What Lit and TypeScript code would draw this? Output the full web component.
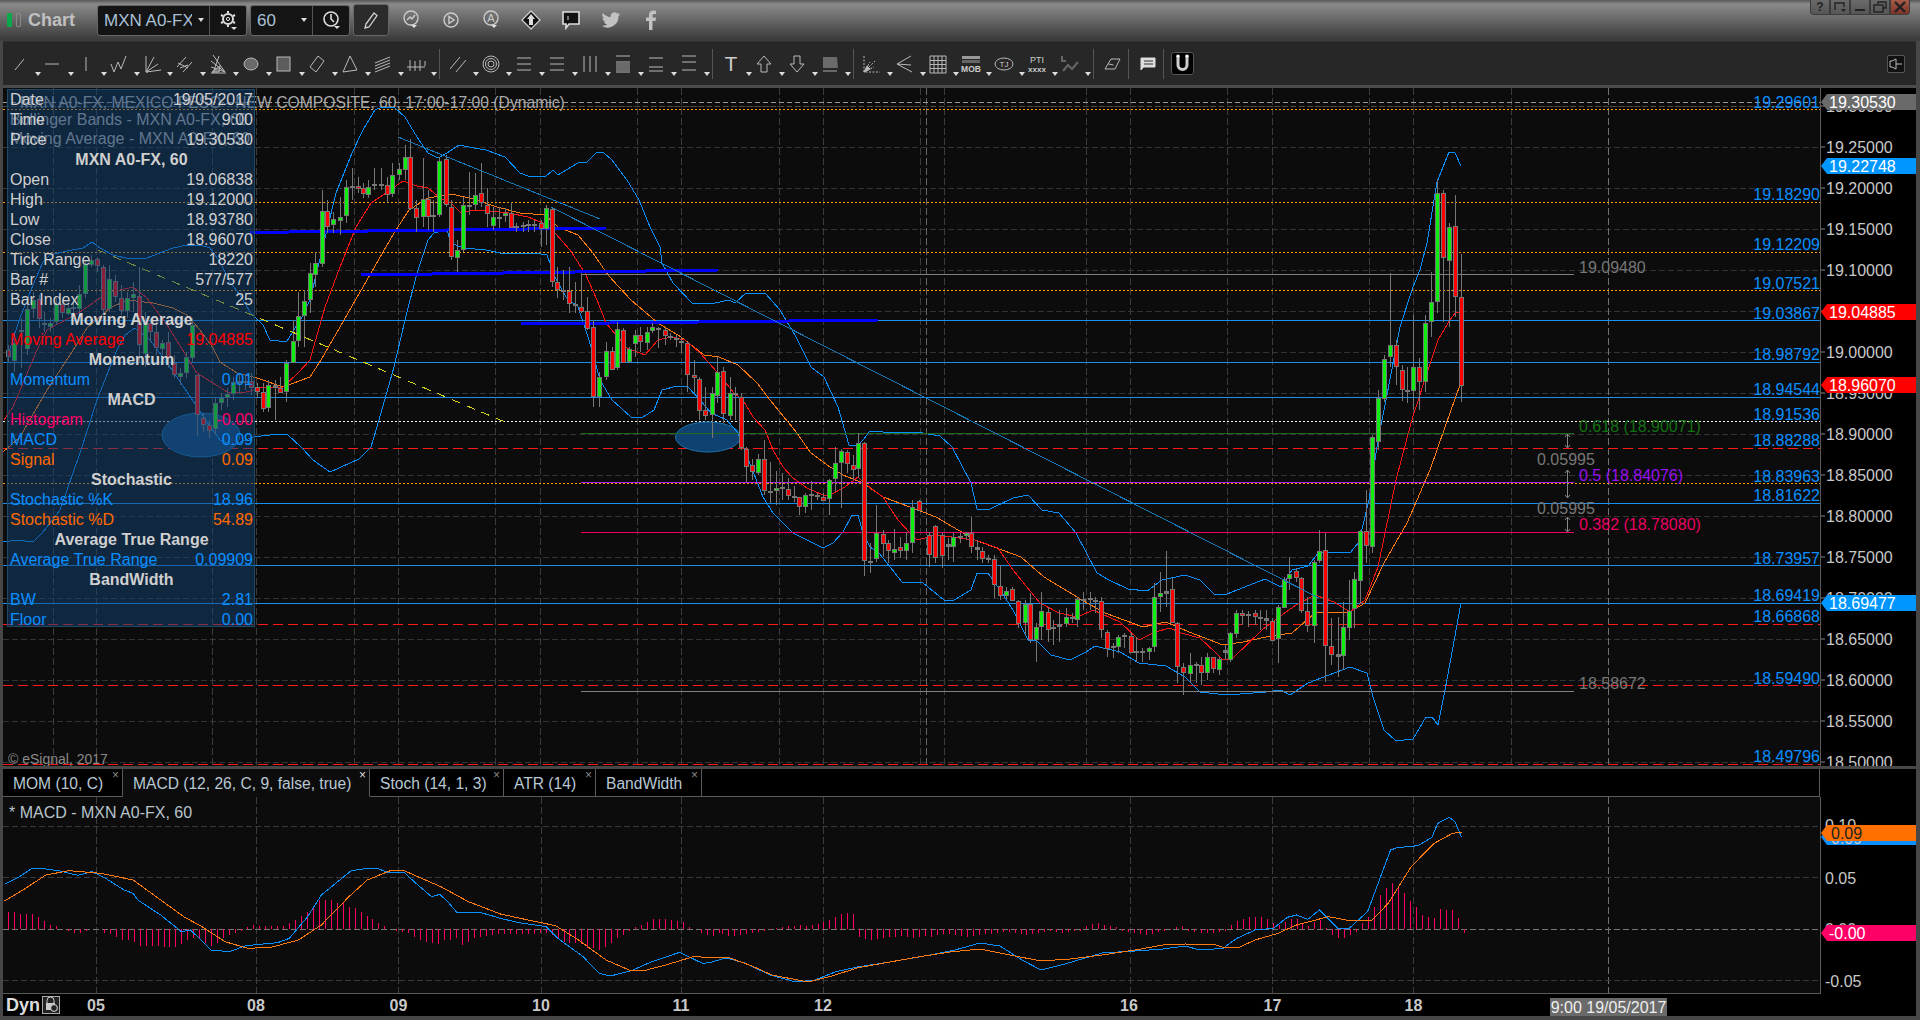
import { LitElement, html, svg, css } from "lit";
import { customElement } from "lit/decorators.js";

// price pane: 41px per 0.05, 19.25 sits at y=147
const py = (p: number) => 147 + (19.25 - p) * 820;

const BLUE = "#0a8fff";
const ORANGE = "#ff9a10";
const RED = "#ff1a1a";

type Candle = { x: number; c: string; t: number; b: number; wt: number; wb: number };

// rows are: dx colour top bottom wickTop wickBottom, read off the chart at a given scale
function seg(x0: number, y0: number, sx: number, sy: number, raw: string): Candle[] {
  const p = raw.trim().split(/\s+/);
  const out: Candle[] = [];
  for (let i = 0; i + 5 < p.length; i += 6) {
    out.push({
      x: x0 + +p[i] / sx,
      c: p[i + 1],
      t: y0 + +p[i + 2] / sy,
      b: y0 + +p[i + 3] / sy,
      wt: y0 + +p[i + 4] / sy,
      wb: y0 + +p[i + 5] / sy,
    });
  }
  return out;
}

const candles: Candle[] = [
  ...seg(0, 85, 3, 3, `
    25 r 795 813 780 830  43 g 775 825 740 860  62 n 735 738 700 850  80 g 672 790 640 810
    98 g 645 668 620 700  116 r 642 700 630 730  133 n 715 717 680 740  150 g 714 724 700 740
    168 g 658 710 640 720  185 r 658 682 645 700  203 g 668 682 650 690  220 n 665 668 640 690
    238 g 628 670 600 680  256 g 538 625 525 640  274 g 524 535 510 545  292 r 523 540 515 560
    310 r 545 670 540 690  328 g 583 670 540 680  346 r 588 633 570 650  364 r 640 675 600 690
    380 g 640 675 620 700  398 g 628 637 590 680  416 r 632 776 545 830  434 g 715 805 680 845
    451 r 715 740 700 770  469 r 740 785 720 810  487 g 775 790 765 810  505 r 770 815 740 850
    523 r 833 866 810 880  541 g 865 873 850 900  557 g 817 862 800 880  575 g 720 815 700 830
    592 r 870 987 870 1053  610 r 1000 1017 985 1040  628 r 1019 1033 1005 1060  646 g 955 1030 935 1050
    664 g 940 953 925 975  682 g 928 937 910 965  700 g 890 923 875 945  718 n 887 890 865 925
    736 n 887 890 870 915  752 r 887 905 865 930  770 r 905 917 895 940`),
  ...seg(260, 100, 2.613, 3, `
    8 r 875 922 850 935  22 g 856 922 840 935  38 n 855 862 840 960  53 r 865 877 830 880
    69 g 790 875 780 905  85 g 722 785 660 790  100 g 647 718 575 740  116 g 602 643 570 740
    130 g 520 598 490 640  145 g 490 522 455 560  161 g 332 487 270 500  176 r 332 376 300 400
    192 g 358 372 335 400  208 g 350 358 290 405  224 g 262 346 240 370  240 n 257 260 205 300
    255 r 257 262 230 280  270 r 265 280 250 295  283 g 260 280 240 295  299 g 252 256 205 270
    315 n 251 254 205 270  331 r 254 281 230 310  346 g 226 280 190 290  362 g 208 224 190 240
    378 g 170 205 135 240  393 r 170 322 118 330  408 r 325 352 300 395  425 g 298 348 175 380
    440 r 298 348 270 390  453 n 344 348 300 395  469 g 182 342 170 350  485 r 178 312 165 320
    500 r 322 468 300 480  516 g 450 470 420 515  531 g 316 447 290 455  547 n 316 319 215 345
    563 g 284 312 220 330  578 r 280 308 190 320  594 r 314 338 265 380  608 g 350 374 320 390
    624 n 350 353 320 385  640 g 340 346 325 365  655 r 338 380 305 385  670 n 379 382 370 395
    686 n 376 379 365 395  701 n 371 373 360 395  717 n 371 373 360 395  733 r 370 385 360 440
    748 g 325 385 315 435  762 r 326 542 320 560  777 r 545 566 500 595  793 n 571 575 510 600
    808 r 572 607 500 640  824 n 613 617 545 640  840 r 622 634 520 640  855 r 632 682 590 690
    871 r 682 890 660 920  887 g 832 890 815 920  903 g 752 826 725 840  919 r 752 805 740 810
    933 g 688 802 665 810  948 r 690 785 685 790  963 g 748 784 740 790  979 g 706 730 690 770
    994 r 706 725 680 755  1010 g 695 725 680 750  1025 g 682 690 670 700  1040 n 683 685 680 745
    1057 r 690 706 685 735  1072 n 708 712 700 720  1086 n 715 719 705 740  1101 n 724 727 710 760
    1117 r 730 822 725 875  1133 r 825 832 780 880  1148 r 838 930 830 960  1164 r 930 945 860 960
    1180 g 878 940 860 1015  1195 g 816 884 770 910  1211 r 814 940 800 970  1227 g 878 944 830 960
    1242 n 880 884 860 960  1256 r 890 1040 880 1050`),
  ...seg(730, 400, 3, 3, `
    49 r 146 196 140 245  67 r 196 214 178 240  85 g 176 214 162 225  103 r 176 270 120 285
    121 n 274 277 185 310  139 g 263 268 212 315  157 n 262 265 220 300  175 r 266 283 235 300
    193 n 289 293 258 305  208 r 292 319 290 345  226 g 286 319 280 338  244 n 283 287 242 330
    262 n 284 287 280 300  280 r 290 298 280 300  298 g 241 295 238 345  316 g 190 234 140 275
    334 g 154 186 148 325  352 r 157 190 150 220  370 r 194 205 165 240  385 g 130 205 100 235
    403 r 130 480 125 527`),
  ...seg(860, 400, 2.613, 3, `
    27 n 482 485 430 520  43 g 400 475 315 485  59 r 402 430 390 470  74 r 430 452 420 490
    90 g 446 455 388 480  105 r 442 452 410 475  121 g 430 452 395 480  137 g 320 425 300 460
    153 r 302 328 300 330  181 r 404 460 395 502  197 r 377 470 375 490  213 r 404 463 400 505
    229 n 433 439 415 480  244 g 412 438 400 485  260 n 407 411 400 430  276 g 400 407 395 420
    291 r 400 440 350 460  307 n 442 448 420 480  320 r 452 472 440 490  335 n 475 478 465 490
    351 r 478 553 465 595  367 r 557 583 495 600  382 g 572 583 562 598  398 r 566 598 560 600
    414 r 602 667 600 685  430 g 612 667 600 705  445 r 612 718 580 730  461 g 680 716 670 785
    474 g 634 678 575 720  490 r 637 688 620 725  505 n 680 684 660 735  521 n 671 676 630 725
    537 g 650 667 625 680  553 n 652 655 640 670  568 g 598 658 590 680  584 n 597 600 575 630
    600 n 595 598 575 630  615 n 601 604 590 640  631 r 603 688 590 715  645 r 695 742 690 770
    660 n 739 743 730 775  675 g 712 738 705 760  691 n 706 709 700 745  707 r 707 754 700 760
    722 n 754 757 710 785  738 n 754 757 745 785  754 g 745 754 740 780  769 g 592 740 550 755
    785 g 580 590 515 635  799 n 572 577 452 620  814 r 568 668 535 670  829 r 670 800 665 850
    845 r 802 818 790 885  861 g 794 818 760 850  877 n 793 796 785 850  892 r 796 818 770 855
    908 g 772 818 760 840  923 r 772 805 770 820  939 g 776 805 770 825  953 n 750 756 735 780
    968 g 700 778 695 785  983 g 638 697 630 715  999 r 638 644 630 675  1015 n 643 647 632 680
    1031 r 640 650 630 675  1046 n 652 655 630 690  1062 n 655 660 630 690  1077 r 662 718 655 720
    1093 g 620 714 615 790  1109 g 536 619 530 625  1122 g 523 535 472 570  1138 r 514 533 505 545
    1153 r 535 632 530 640  1169 r 634 677 590 695  1185 g 487 677 480 730  1200 g 452 480 390 490
    1216 r 449 733 400 845  1232 r 737 762 655 795  1248 n 762 767 650 830  1263 g 680 764 605 810
    1277 g 632 680 540 720  1292 g 538 625 515 685  1307 g 394 540 390 610  1323 r 394 436 270 490
    1339 g 110 436 105 460`),
  ...seg(1350, 170, 3, 3, `
    85 g 685 815 660 840  103 g 566 682 555 695  121 g 526 558 310 590  139 r 526 590 510 645
    157 r 601 658 585 692  172 n 660 664 590 698  190 g 592 660 435 720  208 r 592 634 565 720
    226 g 460 634 435 665  244 g 397 454 305 500  262 g 70 394 30 430  280 r 70 262 60 457
    298 g 170 268 160 472  316 r 167 378 75 440  334 r 380 643 252 697`),
];

const upperBand = [
  [8,355],[20,318],[33,285],[43,262],[50,255],[67,251],[83,248],[92,242],[100,248],[113,255],[130,259],[147,258],[173,248],[187,245],[200,245],[210,248],[220,262],[230,282],[240,295],[250,312],[263,325],[270,340],[279,341],[287,341],[302,317],[310,300],[336,193],[352,153],[363,130],[375,110],[382,107],[394,107],[405,117],[417,137],[428,153],[438,158],[447,153],[459,145],[474,148],[486,150],[505,157],[520,173],[528,176],[545,177],[553,170],[558,175],[578,163],[587,162],[597,152],[604,153],[612,160],[627,180],[639,200],[650,227],[660,247],[662,263],[673,283],[692,303],[715,303],[729,300],[735,303],[746,293],[765,293],[780,310],[796,337],[811,367],[824,377],[838,407],[849,445],[858,445],[863,440],[870,431],[883,432],[917,432],[940,436],[952,447],[971,483],[977,509],[990,509],[1013,498],[1028,495],[1042,510],[1059,513],[1076,533],[1097,573],[1109,580],[1128,589],[1147,591],[1162,580],[1185,575],[1200,580],[1214,594],[1227,594],[1265,579],[1281,587],[1292,570],[1308,566],[1319,552],[1350,553],[1359,542],[1369,500],[1378,440],[1386,400],[1400,327],[1413,287],[1420,270],[1427,243],[1437,182],[1449,152],[1455,153],[1461,166],
];
const lowerBand = [
  [3,542],[17,540],[33,542],[43,532],[60,510],[80,453],[97,400],[110,367],[117,350],[125,335],[135,328],[150,340],[170,367],[187,392],[207,422],[220,440],[233,445],[253,437],[270,435],[287,434],[302,448],[313,460],[330,472],[359,459],[371,447],[379,420],[394,367],[405,320],[417,273],[428,240],[434,233],[447,230],[451,243],[463,248],[486,250],[505,254],[520,253],[535,253],[547,255],[555,277],[566,297],[578,307],[589,340],[600,380],[612,400],[631,417],[643,417],[654,410],[662,390],[677,386],[688,387],[700,400],[711,413],[727,420],[738,433],[763,497],[773,513],[793,533],[813,543],[823,548],[833,543],[843,532],[852,515],[858,515],[863,533],[870,547],[879,553],[902,582],[923,583],[944,600],[954,600],[971,590],[977,573],[988,573],[1000,590],[1013,610],[1028,640],[1036,640],[1051,655],[1070,660],[1086,652],[1095,646],[1120,652],[1139,663],[1166,666],[1185,677],[1200,692],[1227,695],[1266,692],[1281,690],[1290,695],[1308,683],[1350,667],[1367,673],[1373,697],[1384,730],[1396,741],[1413,739],[1426,717],[1432,717],[1438,725],[1445,690],[1453,647],[1461,603],
];
const redMa = [
  [4,420],[13,407],[37,350],[47,330],[80,312],[107,293],[133,287],[147,298],[167,325],[197,373],[213,383],[227,392],[243,393],[260,388],[283,387],[298,373],[310,360],[325,307],[340,267],[356,227],[371,203],[386,193],[403,181],[417,186],[428,188],[440,198],[451,203],[461,213],[474,210],[490,211],[509,213],[528,217],[543,223],[555,233],[570,250],[585,273],[597,300],[606,323],[627,348],[645,355],[658,340],[671,337],[685,340],[700,353],[717,372],[734,393],[743,400],[753,417],[765,430],[773,450],[783,467],[793,478],[807,488],[823,495],[830,495],[845,487],[858,477],[863,482],[883,497],[898,520],[910,533],[917,540],[936,535],[975,540],[998,548],[1013,570],[1040,603],[1059,613],[1078,617],[1093,610],[1120,622],[1139,640],[1155,632],[1170,628],[1181,633],[1200,638],[1216,653],[1223,660],[1233,658],[1262,630],[1279,617],[1296,605],[1315,595],[1334,602],[1350,612],[1365,600],[1378,567],[1396,480],[1411,423],[1415,410],[1428,370],[1438,340],[1450,320],[1455,313],[1460,312],
];
const orangeMa = [
  [3,452],[20,437],[47,390],[70,355],[87,328],[110,308],[127,300],[153,303],[173,308],[187,315],[200,330],[213,348],[220,362],[237,373],[257,378],[283,387],[310,377],[321,360],[344,320],[371,273],[394,233],[409,210],[428,198],[451,194],[474,199],[497,207],[520,213],[545,215],[558,227],[578,235],[593,253],[608,275],[631,300],[658,323],[681,337],[704,355],[719,357],[738,365],[757,383],[770,400],[797,433],[810,452],[827,465],[843,475],[863,483],[883,497],[910,507],[936,517],[975,540],[1021,557],[1044,577],[1082,600],[1105,613],[1143,627],[1166,622],[1189,632],[1223,645],[1243,642],[1266,637],[1292,633],[1315,613],[1350,612],[1365,603],[1384,563],[1407,523],[1430,470],[1445,427],[1451,410],[1460,385],
];

// macd pane
const macdBlue = [
  ...[[10,433],[45,408],[70,385],[100,387],[130,393],[170,406],[200,395],[230,415],[270,450],[290,460],[300,480],[350,525],[395,575],[415,570],[460,630],[500,635],[535,617],[605,608],[630,595],[670,530],[700,465],[740,420],[765,392],[800,385],[825,387],[845,397],[880,397],[910,435],[940,470],[958,463],[975,485],[995,517],[1045,517],[1090,535],[1130,548],[1190,560],[1215,595],[1270,650],[1305,700],[1330,708],[1375,692],[1420,665],[1480,637],[1530,670],[1545,668]].map(([x, y]) => [x / 2.178, 740 + y / 3]),
  [726,958],[745,963],[770,975],[796,982],[815,980],[835,972],[857,967],[890,962],[930,955],[955,950],[980,943],[1000,946],[1022,960],[1041,970],[1065,964],[1102,953],[1135,951],[1163,949],[1185,946],
  ...[[0,570],[50,565],[80,535],[120,510],[160,505],[190,472],[210,465],[235,478],[260,450],[300,505],[325,505],[365,455],[415,270],[430,263],[475,257],[505,232],[518,190],[543,172],[555,185],[570,232]].map(([x, y]) => [1200 + x / 2.178, 760 + y / 3]),
];
const macdOrange = [
  ...[[10,483],[50,450],[100,405],[150,392],[220,400],[290,420],[340,470],[400,530],[440,560],[490,605],[540,625],[590,622],[650,600],[700,555],[760,470],[800,420],[850,392],[880,392],[960,440],[1020,485],[1090,522],[1150,540],[1210,557],[1260,600],[1320,660],[1370,690],[1400,693],[1450,675],[1510,650],[1545,652]].map(([x, y]) => [x / 2.178, 740 + y / 3]),
  [730,958],[752,966],[772,975],[808,982],[832,976],[857,968],[890,962],[918,957],[950,952],[980,949],[1010,955],[1041,961],[1070,959],[1102,955],[1135,950],[1163,945],[1185,944],
  ...[[0,553],[30,553],[50,562],[85,562],[120,540],[170,520],[210,495],[280,470],[330,483],[375,480],[410,430],[460,320],[510,250],[550,220],[570,216]].map(([x, y]) => [1200 + x / 2.178, 760 + y / 3]),
];

const histA = [515,515,522,522,522,530,542,555,558,568,572,578,578,572,568,568,578,582,590,600,600,605,618,618,618,618,620,622,622,612,600,595,595,610,618,608,595,585,580,572,560,555,558,558,558,558,558,550,540,528,515,500,480,480,480,490,490,500,505,515,528,538,548,558,568,572,575,578,590,600,605,610,612,600,600,595,615,605,595,590,587,585,583,583,583,583,583,583,583,580,580,585,598,605,610,610,612,625,625,630,622,610,595,585,572,562,555,545,537,537,538,540,542,545,560,568,578,585,588,580];
const histMid = [-5,-7,-7,-6,-5,-4,-3,-2,-1,1,2,3,3,4,3,4,5,7,9,12,15,16,15,-8,-10,-11,-10,-9,-8,-8,-7,-8,-9,-8,-7,-8,-6,-5,-5,-6,-7,-8,-7,-6,-5,-5,-4,-3,-3,-4,-5,-6,-5,-4,-3,-2,-3,-4,-3,-2,-2,3,5,6,4,3,2,-2,-3,-4,-5,-6,-5,-3,-2,-1,2,3,-2,-3];
const histB = [518,518,518,515,512,495,484,476,470,470,472,478,490,495,485,478,478,490,498,485,480,505,525,535,535,525,515,490,470,440,405,385,368,380,400,423,440,465,472,475,448,450,450,475,518];
const histBars = [
  ...histA.map((d, i) => [8.3 + i * 5.97, 740 + d / 3]),
  ...histMid.map((d, i) => [722 + i * 5.97, 929 - d]),
  ...histB.map((d, i) => [1201 + i * 5.97, 760 + d / 3]),
];

const pts = (a: number[][]) => a.map((p) => p.join(",")).join(" ");

const gridV = [53,96,212,256,354.5,398.5,495,540.5,637.5,681.5,779.5,823,920.5,944,1086.5,1130.5,1227,1272.5,1369.5,1413.5,1511];

const priceLevels = [19.3,19.25,19.2,19.15,19.1,19.05,19.0,18.95,18.9,18.85,18.8,18.75,18.7,18.65,18.6,18.55,18.5];

const levels: { y: number; label: string; labelY: number; color: string; dash?: string }[] = [
  { y: 109, label: "19.29601", labelY: 102, color: ORANGE, dash: "2 2" },
  { y: 202, label: "19.18290", labelY: 194, color: ORANGE, dash: "2 2" },
  { y: 252, label: "19.12209", labelY: 244, color: ORANGE, dash: "2 2" },
  { y: 290, label: "19.07521", labelY: 283, color: ORANGE, dash: "2 2" },
  { y: 320, label: "19.03867", labelY: 313, color: "#1a8fee" },
  { y: 362, label: "18.98792", labelY: 354, color: "#1a8fee" },
  { y: 397, label: "18.94544", labelY: 389, color: "#1a8fee" },
  { y: 421, label: "18.91536", labelY: 414, color: "#f0f0f0", dash: "2 2" },
  { y: 448, label: "18.88288", labelY: 440, color: RED, dash: "10 5" },
  { y: 483, label: "18.83963", labelY: 476, color: ORANGE, dash: "2 2" },
  { y: 503, label: "18.81622", labelY: 495, color: "#1a8fee" },
  { y: 565, label: "18.73957", labelY: 558, color: "#1a8fee" },
  { y: 603, label: "18.69419", labelY: 595, color: "#1a8fee" },
  { y: 624, label: "18.66868", labelY: 616, color: RED, dash: "10 5" },
  { y: 685, label: "18.59490", labelY: 678, color: RED, dash: "10 5" },
  { y: 764, label: "18.49796", labelY: 756, color: RED, dash: "10 5" },
];

const fibs = [
  { y: 274, label: "19.09480", labelY: 267, color: "#808080", text: "#777" },
  { y: 433.5, label: "0.618 (18.90071)", labelY: 426, color: "#1c6a1c", text: "#127012" },
  { y: 482.5, label: "0.5 (18.84076)", labelY: 475, color: "#b020ff", text: "#9a10f0" },
  { y: 532, label: "0.382 (18.78080)", labelY: 524, color: "#f00068", text: "#e80060" },
  { y: 691, label: "18.58672", labelY: 683, color: "#808080", text: "#777" },
];

const tags = [
  { y: 102, label: "19.30530", bg: "#6a6a6a", fg: "#fff" },
  { y: 166, label: "19.22748", bg: "#0096ff", fg: "#fff" },
  { y: 312, label: "19.04885", bg: "#ff0000", fg: "#fff" },
  { y: 385, label: "18.96070", bg: "#ff0000", fg: "#fff" },
  { y: 603, label: "18.69477", bg: "#0096ff", fg: "#fff" },
];

const dataRows: { k: string; v?: string; head?: boolean; cls?: string }[] = [
  { k: "Date", v: "19/05/2017" },
  { k: "Time", v: "9:00" },
  { k: "Price", v: "19.30530" },
  { k: "MXN A0-FX, 60", head: true },
  { k: "Open", v: "19.06838" },
  { k: "High", v: "19.12000" },
  { k: "Low", v: "18.93780" },
  { k: "Close", v: "18.96070" },
  { k: "Tick Range", v: "18220" },
  { k: "Bar #", v: "577/577" },
  { k: "Bar Index", v: "25" },
  { k: "Moving Average", head: true },
  { k: "Moving Average", v: "19.04885", cls: "c-red" },
  { k: "Momentum", head: true },
  { k: "Momentum", v: "0.01", cls: "c-blue" },
  { k: "MACD", head: true },
  { k: "Histogram", v: "-0.00", cls: "c-pink" },
  { k: "MACD", v: "0.09", cls: "c-blue" },
  { k: "Signal", v: "0.09", cls: "c-orange" },
  { k: "Stochastic", head: true },
  { k: "Stochastic %K", v: "18.96", cls: "c-blue" },
  { k: "Stochastic %D", v: "54.89", cls: "c-orange" },
  { k: "Average True Range", head: true },
  { k: "Average True Range", v: "0.09909", cls: "c-blue" },
  { k: "BandWidth", head: true },
  { k: "BW", v: "2.81", cls: "c-blue" },
  { k: "Floor", v: "0.00", cls: "c-blue" },
];

const tabs = [
  { t: "MOM (10, C)", w: 120 },
  { t: "MACD (12, 26, C, 9, false, true)", w: 247, on: true },
  { t: "Stoch (14, 1, 3)", w: 134 },
  { t: "ATR (14)", w: 92 },
  { t: "BandWidth", w: 106 },
];

// toolbar icons, all on a 22x22 box
const tool: Record<string, unknown> = {
  line: svg`<path d="M6 17L15 6"/>`,
  hline: svg`<path d="M3 11H17"/>`,
  vline: svg`<path d="M11 4V18"/>`,
  zig: svg`<path d="M3 11l3 8 4-10 3 7 5-13"/>`,
  fan: svg`<path d="M5 3v16h2M5 19L13 4M5 19l12-8M5 19l15-2"/>`,
  cross: svg`<path d="M3 14L12 4M9 19l9-10M6 15l8-3M4 10l10 5"/>`,
  fibfan: svg`<path d="M6 2l12 17M4 8l14 11M4 14l14 5M4 20h15M12 3L6 20"/><path d="M5 19l8-6-1 6z" fill="#777"/>`,
  ellipse: svg`<ellipse cx="11" cy="11" rx="7" ry="6" fill="#6a6a6a"/>`,
  rect: svg`<rect x="4" y="4" width="13" height="14" fill="#5c5c5c"/>`,
  diamond: svg`<path d="M12 3l6 5-8 11-6-5z"/>`,
  tri: svg`<path d="M11 3l7 14-14 2z"/>`,
  hatch: svg`<path d="M3 10l15-6M3 13l15-6M3 16l15-6M3 19l15-6"/>`,
  fork: svg`<path d="M2 14H20M5 7v11M10 8v10M15 7v11M20 8v5"/>`,
  dbl: svg`<path d="M3 16L13 4M9 19L19 7"/>`,
  rings: svg`<circle cx="11" cy="11" r="8"/><circle cx="11" cy="11" r="5.5"/><circle cx="11" cy="11" r="3"/>`,
  h3: svg`<path d="M4 5H18M4 11H18M4 17H18"/>`,
  v3: svg`<path d="M5 3V19M11 3V19M17 3V19"/>`,
  hfill: svg`<path d="M4 3H18M4 9H18M4 19H18"/><rect x="4" y="10" width="14" height="8" fill="#6a6a6a" stroke="none"/>`,
  h2fill: svg`<path d="M4 5H18M4 14H18M4 18H18"/>`,
  h3b: svg`<path d="M4 3H18M4 9H18M4 17H18"/>`,
  up: svg`<path d="M11 3l7 8h-4v8H8v-8H4z"/>`,
  down: svg`<path d="M11 19l7-8h-4V3H8v8H4z"/>`,
  band: svg`<path d="M4 4H18l1 11H4z" fill="#6a6a6a" stroke="none"/><path d="M4 18H18" stroke="#aaa"/>`,
  burst: svg`<path d="M3 3V19H19M3 19L14 8M3 19l10-5M3 19l6-10" stroke-dasharray="2 1.5"/><path d="M3 19l6-3-3-3z" fill="#bbb"/>`,
  arrows: svg`<path d="M17 3L3 11l14 1M3 11l15 8"/>`,
  table: svg`<path d="M3 3H19V20H3zM3 7.5H19M3 11.5H19M3 15.5H19M7 3V20M11 3V20M15 3V20"/>`,
  eraser: svg`<path d="M4 16l6-10h9l-5 10zM7.5 11l5 1"/>`,
  comment: svg`<path d="M5 5H19V14H7.5L5 17z" fill="#ddd" stroke="#ddd"/><path d="M8 8H17M8 11H17" stroke="#333"/>`,
};

const txt = (t: string, x: number, y: number, size = 11, weight = 400, fill = "#ccc") =>
  svg`<text x=${x} y=${y} font-size=${size} font-weight=${weight} fill=${fill} text-anchor="middle" stroke="none">${t}</text>`;

const toolExtra: Record<string, unknown> = {
  text: txt("T", 11, 18, 21, 400, "#ccc"),
  mob: svg`<rect x="2" y="3" width="18" height="3" fill="#999" stroke="none"/><rect x="2" y="7" width="18" height="3" fill="#666" stroke="none"/>${txt("MOB", 11, 19, 8.5, 700)}`,
  tj: svg`<ellipse cx="11" cy="11" rx="9" ry="6"/>${txt("TJ", 11, 14, 8, 400)}`,
  pti: svg`${txt("PTI", 11, 10, 9, 400)}${txt("xxxx", 11, 19, 8, 700)}`,
  trade: svg`<path d="M3 3v5h4M4 18l5-6 4 4 6-7" stroke="#666" stroke-width="2"/>`,
};

const row2 = [
  ["line","hline","vline","zig","fan","cross","fibfan","ellipse","rect","diamond","tri","hatch","fork"],
  ["dbl","rings","h3","h3","v3","hfill","h2fill","h3b"],
  ["text","up","down","band"],
  ["burst","arrows","table","mob","tj","pti","trade"],
];

const caret = html`<i class="caret"></i>`;

@customElement("app-root")
export class AppRoot extends LitElement {
  static styles = css`
    :host {
      display: block;
      width: 1920px;
      height: 1020px;
      overflow: hidden;
      background: #474747;
      font-family: "Liberation Sans", Arial, sans-serif;
      font-size: 16px;
    }
    svg {
      display: block;
    }
    svg text {
      font-family: "Liberation Sans", Arial, sans-serif;
    }

    .titlebar {
      height: 41px;
      box-sizing: border-box;
      padding-left: 7px;
      display: flex;
      align-items: center;
      background: linear-gradient(#575757 0, #8a8a8a 4px, #3a3a3a 100%);
      border-bottom: 1px solid #3e3e3e;
    }
    .led {
      width: 5px;
      height: 14px;
      border-radius: 1px;
      border: 1px solid #888;
      box-sizing: border-box;
      margin-right: 4px;
    }
    .led.on {
      background: #0aa84c;
      border-color: #0aa84c;
    }
    .win-title {
      margin: 0 22px 0 3px;
      font-size: 18px;
      font-weight: 700;
      color: #c0c0c0;
    }
    .combo {
      height: 31px;
      display: flex;
      align-items: stretch;
      background: #141414;
      border: 1px solid #666;
      border-radius: 3px;
      box-sizing: border-box;
      margin-right: 3px;
      color: #a9c0d6;
      font-size: 17px;
    }
    .combo .field {
      position: relative;
      padding-left: 6px;
      box-sizing: border-box;
      overflow: hidden;
      line-height: 29px;
      white-space: nowrap;
      border-right: 1px solid #555;
    }
    .combo .field .clip {
      display: block;
      overflow: hidden;
    }
    .field.sym {
      width: 112px;
    }
    .field.sym .clip {
      width: 88px;
    }
    .field.per {
      width: 62px;
    }
    .field .caret {
      top: 12px;
      right: 5px;
    }
    .combo .btn {
      width: 36px;
      display: flex;
      align-items: center;
      justify-content: center;
    }
    .pencil {
      width: 36px;
      height: 32px;
      display: flex;
      align-items: center;
      justify-content: center;
      margin: 0 2px 0 0;
      background: #2b2b2b;
      border: 1px solid #666;
      border-radius: 3px;
      box-sizing: border-box;
    }
    .ticon {
      width: 40px;
      display: flex;
      justify-content: center;
    }
    .winbtns {
      margin-left: auto;
      margin-right: 10px;
      align-self: flex-start;
      display: flex;
      height: 15px;
    }
    .winbtns span {
      width: 20px;
      display: flex;
      align-items: center;
      justify-content: center;
      box-sizing: border-box;
      border: 1px solid #3c3c3c;
      border-top: none;
      background: linear-gradient(#6a6a6a, #565656);
      color: #222;
      font-size: 12px;
      font-weight: 700;
    }
    .winbtns span:first-child {
      border-bottom-left-radius: 4px;
    }
    .winbtns span.close {
      background: linear-gradient(#a85a48, #7c3426);
      border-bottom-right-radius: 4px;
    }

    .body {
      padding: 0 4px 4px 3px;
    }
    .toolbar {
      height: 44px;
      box-sizing: border-box;
      padding: 0 11px 0 6px;
      display: flex;
      align-items: center;
      background: #272727;
      border-top: 1px solid #2f2f2f;
    }
    .tool {
      position: relative;
      flex: none;
      width: 33px;
      height: 22px;
    }
    .tool.plain {
      width: 26px;
    }
    .tool svg {
      fill: none;
      stroke: #b9b9b9;
      stroke-width: 1;
    }
    .caret {
      position: absolute;
      width: 0;
      height: 0;
      border: 3px solid transparent;
      border-top: 4px solid #ddd;
      border-bottom: none;
    }
    .tool .caret {
      right: 1px;
      bottom: -1px;
    }
    .sep {
      flex: none;
      width: 1px;
      height: 30px;
      background: #555;
      margin: 0 7px 0 1px;
    }
    .magnet {
      flex: none;
      width: 23px;
      height: 23px;
      border: 1px solid #555;
      border-radius: 3px;
      background: #000;
      box-sizing: border-box;
    }
    .pin {
      flex: none;
      margin-left: auto;
      width: 18px;
      height: 18px;
      background: #111;
      border: 1px solid #555;
      border-radius: 2px;
      box-sizing: border-box;
    }
    .divider {
      height: 3px;
      background: #4b4b4b;
    }

    .pane {
      position: relative;
      height: 678px;
      background: #0c0c0c;
    }
    .data {
      position: absolute;
      left: 4px;
      top: 1px;
      width: 248px;
      height: 538px;
      box-sizing: border-box;
      padding: 0 1px 0 2px;
      background: rgba(20, 65, 115, 0.5);
      border: 1px solid #1d4a66;
      color: #cfcfcf;
      line-height: 20px;
    }
    .row {
      height: 20px;
      display: flex;
      justify-content: space-between;
      white-space: nowrap;
    }
    .row.head {
      justify-content: center;
      font-weight: 700;
    }
    .c-red {
      color: #ff0000;
    }
    .c-blue {
      color: #0a8fff;
    }
    .c-pink {
      color: #ff0066;
    }
    .c-orange {
      color: #ff6a00;
    }
    .tabbar {
      height: 31px;
      box-sizing: border-box;
      display: flex;
      background: #000;
      border-top: 3px solid #474747;
    }
    .tab {
      position: relative;
      box-sizing: border-box;
      padding: 2px 0 0 10px;
      font-size: 15.6px;
      line-height: 26px;
      color: #b8c8d4;
      border-bottom: 1px solid #5a5a5a;
      border-right: 1px solid #5a5a5a;
      white-space: nowrap;
    }
    .tab.on {
      background: #0c0c0c;
      border-bottom-color: #0c0c0c;
    }
    .tab i {
      position: absolute;
      right: 3px;
      top: 0;
      font-style: normal;
      font-size: 12px;
      line-height: 12px;
      color: #888;
    }
    .tab.on i {
      color: #ddd;
    }
    .tabfill {
      width: 1118px;
      border-bottom: 1px solid #5a5a5a;
      border-right: 1px solid #5a5a5a;
      box-sizing: border-box;
    }
  `;

  private mainSvg() {
    return svg`
      <rect x="1821" y="88" width="95" height="678" fill="#000"/>
      <g shape-rendering="crispEdges" fill="none">
        ${priceLevels.map((p) => svg`<line x1="3" x2="1820" y1=${py(p)} y2=${py(p)} stroke="#333" stroke-dasharray="6 3"/>`)}
        ${gridV.map((x) => svg`<line x1=${x} x2=${x} y1="88" y2="766" stroke="#3c3c3c" stroke-dasharray="7 3"/>`)}
        <line x1="926" x2="926" y1="88" y2="766" stroke="#666" stroke-dasharray="7 3"/>
        <line x1="1608.5" x2="1608.5" y1="88" y2="766" stroke="#707070" stroke-dasharray="7 3"/>
        <line x1="3" x2="1820" y1="102.5" y2="102.5" stroke="#9a9a9a" stroke-dasharray="5 3"/>
        <line x1="3" x2="1820" y1="106.5" y2="106.5" stroke="#4a4a4a" stroke-dasharray="5 3"/>
        ${levels.map((l) => svg`<line x1="3" x2="1820" y1=${l.y} y2=${l.y} stroke=${l.color} stroke-dasharray=${l.dash ?? "none"}/>`)}
      </g>

      <g font-size="16" fill="#aaa">
        <text x="20" y="108" font-size="15.7">MXN A0-FX, MEXICO PESO - NEW COMPOSITE, 60, 17:00-17:00 (Dynamic)</text>
        <text x="10" y="125">Bollinger Bands - MXN A0-FX, 60</text>
        <text x="10" y="144">Moving Average - MXN A0-FX, 60</text>
        <text x="8" y="764" font-size="14" fill="#8a8a8a">© eSignal, 2017</text>
      </g>

      <ellipse cx="201" cy="435" rx="39" ry="22" fill="#0f4270" stroke="#1b74b0"/>
      <ellipse cx="708" cy="437" rx="32.5" ry="15" fill="#0f4270" stroke="#1b74b0"/>

      <g fill="none" stroke-width="1" shape-rendering="crispEdges">
        <polyline points=${pts(upperBand)} stroke=${BLUE}/>
        <polyline points=${pts(lowerBand)} stroke=${BLUE}/>
        <polyline points=${pts(orangeMa)} stroke="#ff7a10"/>
        <polyline points=${pts(redMa)} stroke="#ff1414"/>
      </g>

      <g fill="none" shape-rendering="crispEdges">
        <line x1="250" y1="232.5" x2="606" y2="228" stroke="#0000ff" stroke-width="3"/>
        <line x1="361" y1="275" x2="718" y2="270" stroke="#0000ff" stroke-width="3"/>
        <line x1="521" y1="324" x2="878" y2="320" stroke="#0000ff" stroke-width="3"/>
        ${fibs.map((f) => svg`<line x1="581" x2="1574" y1=${f.y} y2=${f.y} stroke=${f.color}/>`)}
      </g>

      ${candles.map((k) => {
        const fill = k.c === "g" ? "#0eee0e" : k.c === "r" ? "#ff0000" : "#777";
        const x = Math.round(k.x);
        return svg`
          <line x1=${x + 0.5} x2=${x + 0.5} y1=${k.wt} y2=${k.wb} stroke="#777" shape-rendering="crispEdges"/>
          <rect x=${x - 1.5} y=${Math.round(k.t) + 0.5} width="4" height=${Math.max(1, Math.round(k.b - k.t))} fill=${fill} stroke="#777" shape-rendering="crispEdges"/>`;
      })}

      <g fill="none" stroke-width="1" shape-rendering="crispEdges">
        <line x1="398" y1="137" x2="600" y2="219" stroke="#1878b8"/>
        <line x1="551" y1="207" x2="1319" y2="598" stroke="#1878b8"/>
        <line x1="98" y1="250" x2="505" y2="422" stroke="#d4d418" stroke-dasharray="9 7"/>
      </g>

      <g stroke="#888" fill="none">
        <path d="M1567.5 434V447M1567.5 470V497M1567.5 517V531"/>
        <path d="M1565 437l2.500-3 2.500 3M1565 445l2.500 3 2.500-3M1565 473l2.500-3 2.500 3M1565 495l2.500 3 2.500-3M1565 520l2.500-3 2.500 3M1565 529l2.500 3 2.500-3"/>
      </g>
      <g font-size="16" fill="#777">
        <text x="1537" y="465">0.05995</text>
        <text x="1537" y="514">0.05995</text>
      </g>
      <g font-size="16">
        ${fibs.map((f) => svg`<text x="1579" y=${f.labelY + 6} fill=${f.text}>${f.label}</text>`)}
      </g>

      <g font-size="16" fill=${BLUE} text-anchor="end">
        ${levels.map((l) => svg`<text x="1820" y=${l.labelY + 6}>${l.label}</text>`)}
      </g>

      <line x1="1820.5" x2="1820.5" y1="88" y2="766" stroke="#5a5a5a"/>
      <g font-size="16" fill="#c8c8c8">
        ${priceLevels.map((p) => svg`
          <line x1="1821" x2="1825" y1=${py(p)} y2=${py(p)} stroke="#888"/>
          <text x="1826" y=${py(p) + 6}>${p.toFixed(5)}</text>`)}
      </g>
      ${tags.map((t) => svg`
        <polygon points="${1821},${t.y} ${1827},${t.y - 8} ${1916},${t.y - 8} ${1916},${t.y + 8} ${1827},${t.y + 8}" fill=${t.bg}/>
        <text x="1829" y=${t.y + 6} font-size="16" fill=${t.fg}>${t.label}</text>`)}
    `;
  }

  private lowerSvg() {
    const macdGrid = [96,256,398.5,541,681.5,823,1130.5,1272.5,1413.5];
    const days: [string, number][] = [["05",96],["08",256],["09",398.5],["10",541],["11",681],["12",823],["16",1129],["17",1272.5],["18",1413.5]];
    return svg`
      <rect x="3" y="797" width="1817" height="196" fill="#0c0c0c"/>
      <rect x="3" y="993" width="1913" height="23" fill="#000"/>
      <rect x="1821" y="797" width="95" height="196" fill="#000"/>
      <g shape-rendering="crispEdges" fill="none">
        ${macdGrid.map((x) => svg`<line x1=${x} x2=${x} y1="797" y2="993" stroke="#3c3c3c" stroke-dasharray="7 3"/>`)}
        <line x1="1608.5" x2="1608.5" y1="797" y2="993" stroke="#707070" stroke-dasharray="7 3"/>
        <line x1="3" x2="1820" y1="826.5" y2="826.5" stroke="#3a3a3a" stroke-dasharray="6 3"/>
        <line x1="3" x2="1820" y1="877.5" y2="877.5" stroke="#3a3a3a" stroke-dasharray="6 3"/>
        <line x1="3" x2="1820" y1="929.5" y2="929.5" stroke="#777" stroke-dasharray="6 3"/>
        <line x1="3" x2="1820" y1="980.5" y2="980.5" stroke="#3a3a3a" stroke-dasharray="6 3"/>
        ${histBars.map(([x, y]) => svg`<line x1=${Math.round(x) + 0.5} x2=${Math.round(x) + 0.5} y1="929" y2=${y} stroke="#ff0066"/>`)}
      </g>
      <g fill="none" stroke-width="1" shape-rendering="crispEdges">
        <polyline points=${pts(macdBlue)} stroke=${BLUE}/>
        <polyline points=${pts(macdOrange)} stroke="#ff7a10"/>
      </g>
      <text x="9" y="818" font-size="16" fill="#b8c4cc">* MACD - MXN A0-FX, 60</text>

      <g shape-rendering="crispEdges" stroke="#5a5a5a">
        <line x1="3" x2="1821" y1="993.5" y2="993.5"/>
        <line x1="1820.5" x2="1820.5" y1="797" y2="994"/>
      </g>
      <g font-size="16" fill="#c8c8c8">
        <text x="1825" y="831">0.10</text>
        <text x="1825" y="884">0.05</text>
        <text x="1825" y="935">0.00</text>
        <text x="1825" y="987">-0.05</text>
      </g>
      <polygon points="1821,837 1827,829 1916,829 1916,845 1827,845" fill=${BLUE}/>
      <text x="1831" y="844" font-size="16" fill="#ccc">0.09</text>
      <polygon points="1821,833 1827,825 1916,825 1916,841 1827,841" fill="#ff7000"/>
      <text x="1831" y="839" font-size="16" fill="#222">0.09</text>
      <polygon points="1821,933 1827,925 1916,925 1916,941 1827,941" fill="#ff0066"/>
      <text x="1829" y="939" font-size="16" fill="#fff">-0.00</text>

      <text x="6" y="1011" font-size="18" font-weight="700" fill="#ddd">Dyn</text>
      <g fill="none" stroke="#aaa">
        <rect x="42.5" y="996.5" width="17" height="17" fill="#222"/>
        <path d="M47 1003v-2.5a3.5 3.5 0 0 1 7 0V1003" stroke="#ccc"/>
        <rect x="46" y="1003" width="9" height="7" fill="#ccc" stroke="none"/>
        <circle cx="54" cy="1008" r="3.4" fill="#222" stroke="#ddd"/>
      </g>
      <g font-size="16" font-weight="700" fill="#c8c8c8" text-anchor="middle">
        ${days.map(([d, x]) => svg`<text x=${x} y="1011">${d}</text>`)}
      </g>
      <rect x="1550" y="998" width="117" height="18" fill="#6a6a6a"/>
      <text x="1608.5" y="1013" font-size="16" fill="#eee" text-anchor="middle">9:00 19/05/2017</text>
    `;
  }

  render() {
    return html`
      <div class="titlebar">
        <span class="led on"></span><span class="led"></span>
        <span class="win-title">Chart</span>
        <div class="combo">
          <div class="field sym"><span class="clip">MXN A0-FX</span>${caret}</div>
          <div class="btn">
            <svg width="20" height="20" viewBox="0 0 20 20" fill="none" stroke="#ddd" stroke-width="2">
              <circle cx="10" cy="9" r="5"/><circle cx="10" cy="9" r="1.6" stroke-width="1"/>
              <path d="M10 1v2M10 15v2M3 5l2 1M15 12l2 1M3 13l2-1M15 6l2-1" />
              <path d="M13 17h6l-3 3z" fill="#ddd" stroke="none"/>
            </svg>
          </div>
        </div>
        <div class="combo">
          <div class="field per"><span class="clip">60</span>${caret}</div>
          <div class="btn">
            <svg width="20" height="20" viewBox="0 0 20 20" fill="none" stroke="#ddd" stroke-width="1.6">
              <circle cx="10" cy="9" r="7"/><path d="M10 4v5l3 3"/>
              <path d="M13 16h6l-3 3z" fill="#ddd" stroke="none"/>
            </svg>
          </div>
        </div>
        <div class="pencil">
          <svg width="18" height="20" viewBox="0 0 18 20" fill="none" stroke="#cfcfcf" stroke-width="1.3">
            <path d="M4 14L12 3l3 2.5L7 17l-4 1z"/>
          </svg>
        </div>
        <span class="ticon">
          <svg width="20" height="22" viewBox="0 0 20 22" fill="none" stroke="#ccc" stroke-width="1.4">
            <circle cx="10" cy="9" r="7"/><path d="M6 11l3-3 2 2 3-4"/><path d="M10 16h6l-3 3z" fill="#ddd" stroke="none"/>
          </svg>
        </span>
        <span class="ticon">
          <svg width="20" height="20" viewBox="0 0 20 20" fill="none" stroke="#ccc" stroke-width="1.4">
            <circle cx="10" cy="10" r="7"/><path d="M8 6.5l5 3.5-5 3.5z"/>
          </svg>
        </span>
        <span class="ticon">
          <svg width="20" height="22" viewBox="0 0 20 22" fill="none" stroke="#ccc" stroke-width="1.4">
            <circle cx="10" cy="9" r="7"/><text x="10" y="13" text-anchor="middle" font-size="11" fill="#ccc" stroke="none">A</text>
            <path d="M10 16h6l-3 3z" fill="#ddd" stroke="none"/>
          </svg>
        </span>
        <span class="ticon">
          <svg width="20" height="20" viewBox="0 0 20 20">
            <path d="M10 1l9 9-9 9-9-9z" fill="#111" stroke="#ccc" stroke-width="1.3"/>
            <path d="M10 4l4 5h-2v6H8V9H6z" fill="#ddd"/>
          </svg>
        </span>
        <span class="ticon">
          <svg width="20" height="20" viewBox="0 0 20 20" fill="#111" stroke="#ddd" stroke-width="1.6">
            <path d="M2 2H18V14H8l-3 4v-4H2z"/><path d="M7 6v4" stroke-width="1"/>
          </svg>
        </span>
        <span class="ticon">
          <svg width="20" height="20" viewBox="0 0 24 24" fill="#c2c2c2">
            <path d="M23 5c-.8.4-1.700.6-2.600.7.9-.6 1.600-1.400 2-2.500-.9.500-1.800.9-2.900 1.100A4.600 4.600 0 0 0 11.700 8.500 13 13 0 0 1 2.300 3.700a4.600 4.600 0 0 0 1.400 6.100c-.7 0-1.400-.2-2-.6 0 2.200 1.600 4.100 3.700 4.600-.7.200-1.400.2-2.100.1.600 1.800 2.300 3.200 4.300 3.200A9.300 9.300 0 0 1 1 19a13 13 0 0 0 20-11.500c.8-.6 1.500-1.400 2-2.500z"/>
          </svg>
        </span>
        <span class="ticon">
          <svg width="12" height="20" viewBox="0 0 12 20" fill="#c2c2c2">
            <path d="M4 20V11H1V7.500h3V5c0-3 1.800-4.500 4.400-4.500L11 .7v3.200H9.200C7.800 3.900 7.500 4.600 7.500 5.600v1.900H11l-.5 3.500h-3v9z"/>
          </svg>
        </span>
        <div class="winbtns">
          <span>?</span>
          <span>
            <svg width="14" height="12" viewBox="0 0 14 12" fill="none" stroke="#222" stroke-width="1.4">
              <path d="M2 9V2H11V6"/><path d="M8 8h5l-2.500 3z" fill="#222" stroke="none"/>
            </svg>
          </span>
          <span>
            <svg width="14" height="12" viewBox="0 0 14 12"><rect x="2" y="8" width="10" height="2" fill="#222"/></svg>
          </span>
          <span>
            <svg width="14" height="12" viewBox="0 0 14 12" fill="none" stroke="#222" stroke-width="1.4">
              <path d="M5 3V1H13V7H10"/><rect x="1" y="4" width="9" height="7"/>
            </svg>
          </span>
          <span class="close">
            <svg width="14" height="12" viewBox="0 0 14 12" fill="none" stroke="#222" stroke-width="2.400">
              <path d="M2 1L12 11M12 1L2 11"/>
            </svg>
          </span>
        </div>
      </div>

      <div class="body">
        <div class="toolbar">
          ${row2.map(
            (group) => html`
              ${group.map(
                (n) => html`<div class="tool">
                  <svg width="22" height="22" viewBox="0 0 22 22">${tool[n] ?? toolExtra[n]}</svg>
                  ${caret}
                </div>`
              )}
              <span class="sep"></span>
            `
          )}
          <div class="tool plain">
            <svg width="22" height="22" viewBox="0 0 22 22">${tool.eraser}</svg>
          </div>
          <span class="sep"></span>
          <div class="tool plain">
            <svg width="22" height="22" viewBox="0 0 22 22">${tool.comment}</svg>
          </div>
          <span class="sep"></span>
          <div class="magnet">
            <svg width="21" height="21" viewBox="0 0 21 21" fill="none">
              <path d="M6 3V12a4.500 4.500 0 0 0 9 0V3" stroke="#ccc" stroke-width="3"/>
              <path d="M4.500 3h3M13.500 3h3" stroke="#fff" stroke-width="2.500"/>
            </svg>
          </div>
          <div class="pin">
            <svg width="16" height="16" viewBox="0 0 16 16" fill="none" stroke="#bbb">
              <path d="M2 5h2l4-2v10l-4-2H2zM8 8h6"/>
            </svg>
          </div>
        </div>
        <div class="divider"></div>

        <div class="pane">
          <svg width="1913" height="678" viewBox="3 88 1913 678">${this.mainSvg()}</svg>
          <div class="data">
            ${dataRows.map((r) =>
              r.head
                ? html`<div class="row head"><span>${r.k}</span></div>`
                : html`<div class="row ${r.cls ?? ""}"><span>${r.k}</span><span>${r.v}</span></div>`
            )}
          </div>
        </div>

        <div class="tabbar">
          ${tabs.map(
            (t) => html`<div class="tab ${t.on ? "on" : ""}" style="width:${t.w}px">${t.t}<i>×</i></div>`
          )}
          <div class="tabfill"></div>
        </div>
        <svg width="1913" height="219" viewBox="3 797 1913 219">${this.lowerSvg()}</svg>
      </div>
    `;
  }
}
